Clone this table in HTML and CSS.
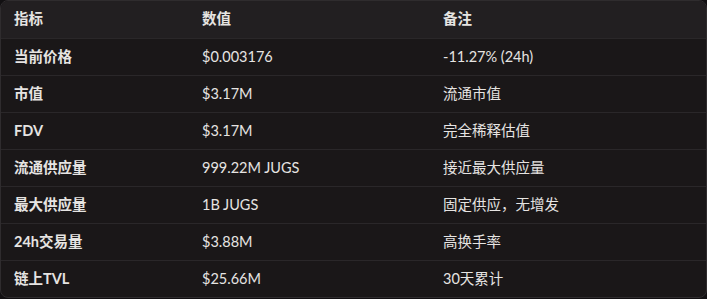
FILE: index.html
```html
<!DOCTYPE html>
<html lang="zh">
<head>
<meta charset="utf-8">
<link rel="stylesheet" href="styles.css">
</head>
<body>
<div class="wrap">
<table class="tbl">
<thead>
<tr><th>指标</th><th>数值</th><th>备注</th></tr>
</thead>
<tbody>
<tr><td>当前价格</td><td>$0.003176</td><td>-11.27% (24h)</td></tr>
<tr><td>市值</td><td>$3.17M</td><td>流通市值</td></tr>
<tr><td>FDV</td><td>$3.17M</td><td>完全稀释估值</td></tr>
<tr><td>流通供应量</td><td>999.22M JUGS</td><td>接近最大供应量</td></tr>
<tr><td>最大供应量</td><td>1B JUGS</td><td>固定供应，无增发</td></tr>
<tr><td>24h交易量</td><td>$3.88M</td><td>高换手率</td></tr>
<tr><td>链上TVL</td><td>$25.66M</td><td>30天累计</td></tr>
</tbody>
</table>
</div>
</body>
</html>
```
FILE: styles.css
```css
html, body {
  margin: 0;
  padding: 0;
  background: #121012;
}
body {
  font-family: Lato, "Noto Sans CJK SC", sans-serif;
  font-size: 14.5px;
  color: #e6e4e2;
}
.wrap {
  width: 705px;
  border: 1px solid #2f2c2e;
  border-radius: 8px;
  overflow: hidden;
  background: #1a1718;
}
.tbl {
  width: 100%;
  border-collapse: collapse;
  table-layout: fixed;
}
.tbl th, .tbl td {
  height: 37px;
  padding: 0 13px;
  text-align: left;
  box-sizing: border-box;
  vertical-align: middle;
  line-height: 20px;
}
.tbl th {
  background: #221f21;
  font-weight: 700;
}
.tbl th:nth-child(1) { width: 188px; }
.tbl th:nth-child(2) { width: 241px; }
.tbl td {
  border-top: 1px solid #2a2729;
}
.tbl td:first-child {
  font-weight: 700;
}
```
